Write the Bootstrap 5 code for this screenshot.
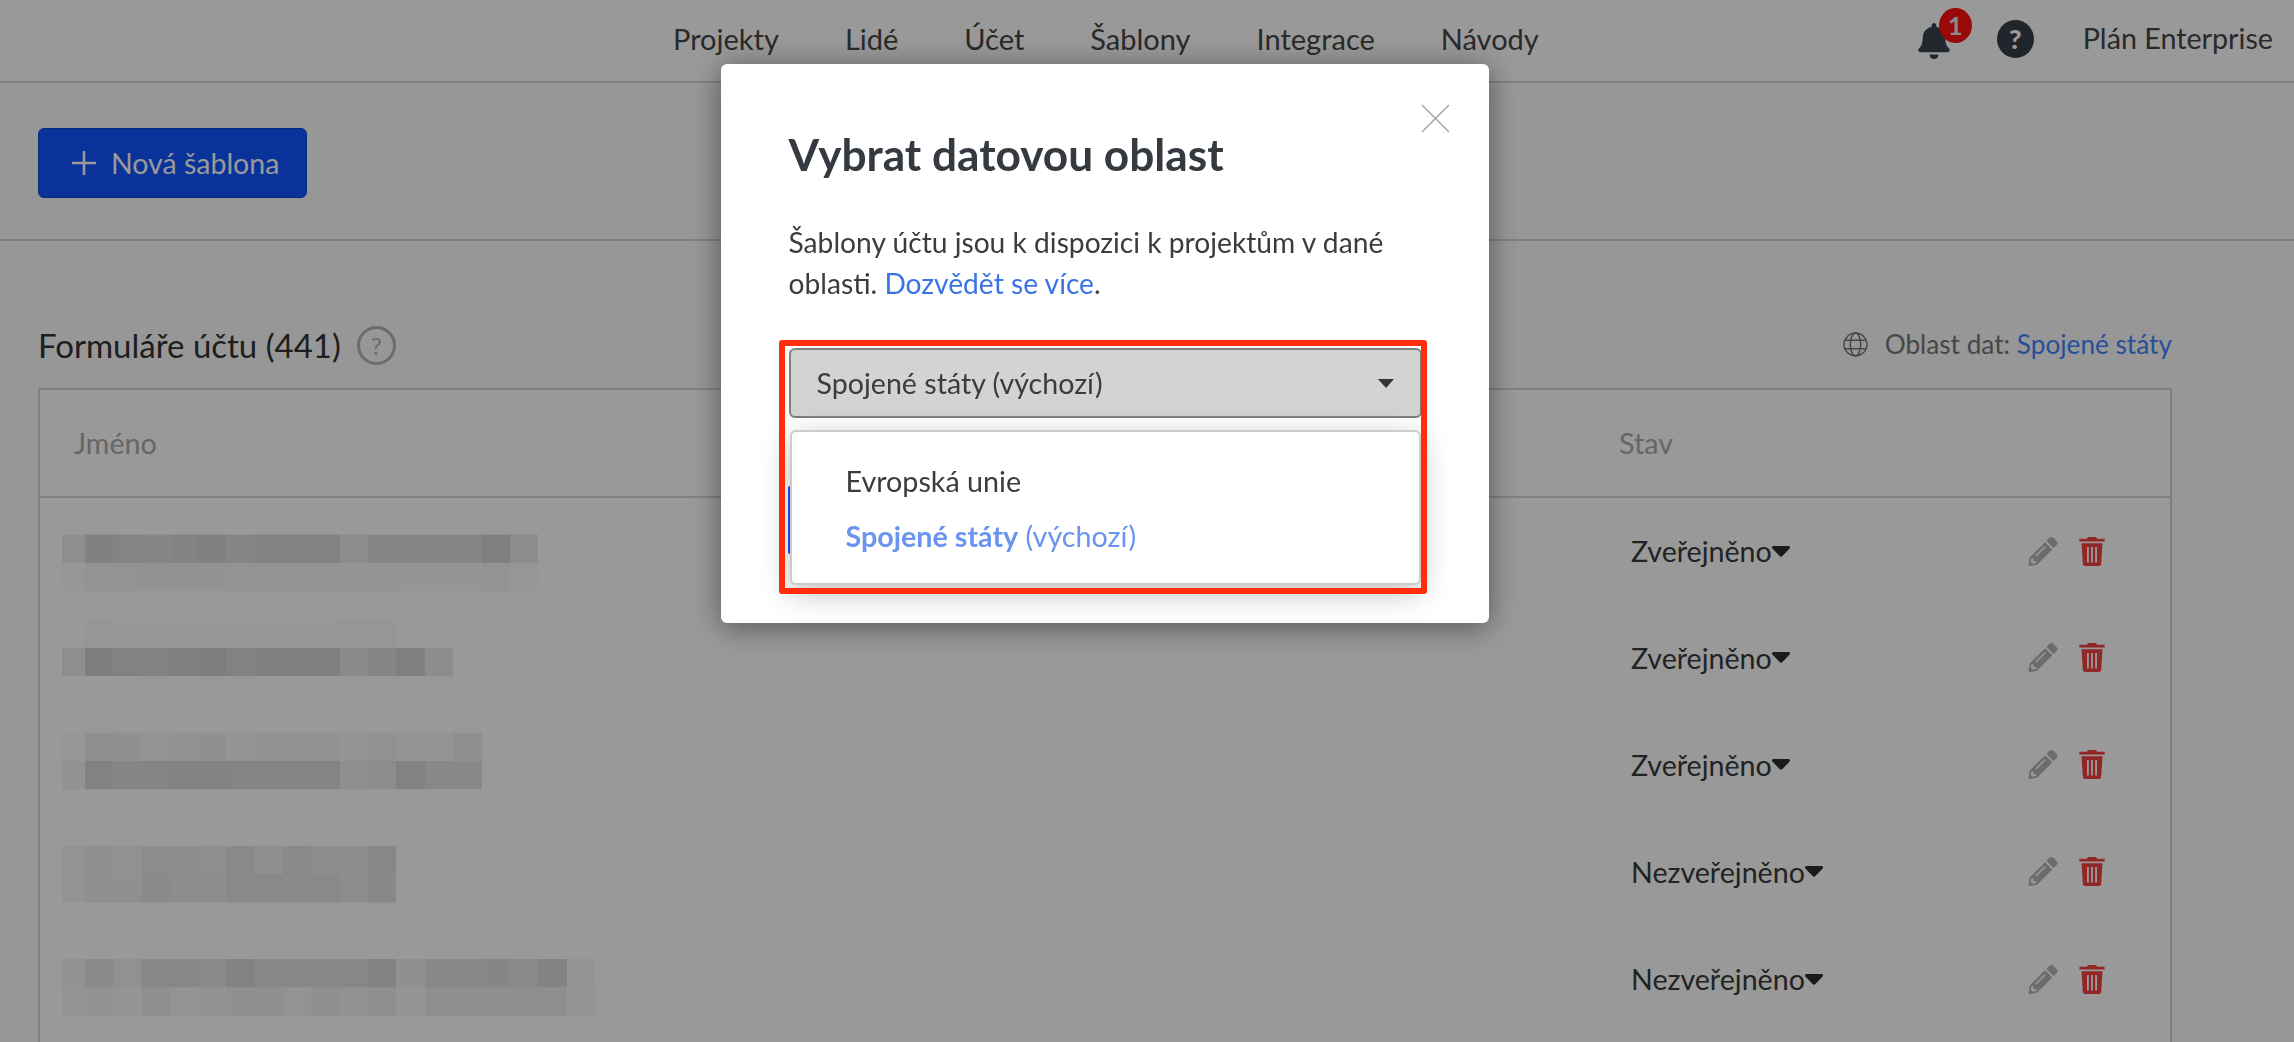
<!DOCTYPE html>
<html lang="cs">
<head>
<meta charset="utf-8">
<title>Šablony</title>
<link href="https://cdn.jsdelivr.net/npm/bootstrap@5.3.0/dist/css/bootstrap.min.css" rel="stylesheet">
<style>
html,body{height:1042px;overflow:hidden}
body{font-family:Lato,"Liberation Sans",sans-serif;background:#fcfcfc;color:#464646;font-size:28.7px}
.topbar{height:83px;border-bottom:2px solid #d6d6d6;background:#fff;padding:0 21px 3px 673px}
.topbar .nav-link{color:#464646;padding:0;font-size:29px;line-height:40px}
.topnav{gap:66px}
.bellwrap{position:relative;width:32px;height:36px;margin-right:47px}
.bellwrap svg{display:block;width:32px;height:36px;fill:#37414c;margin-top:2px}
.bellcount{position:absolute;left:21px;top:-13px;width:33px;height:35px;border-radius:50%;background:#ff1010;color:#e8e8e8;font-size:25px;line-height:35px;font-weight:700;text-align:center}
.helpdark{width:37px;height:38px;border-radius:50%;background:#343e48;color:#fff;font-size:27px;font-weight:900;line-height:38px;text-align:center;margin-right:49px}
.toolbar{height:158px;border-bottom:2px solid #d6d6d6;padding:45px 38px 0}
.btn-newtpl{width:269px;height:70px;background:#1155ff;border:1px solid #0d47d8;color:#fff;font-size:28.5px;border-radius:6px;padding:0 0 0 32px;gap:14px}
.btn-newtpl svg{width:26px;height:26px;stroke:#fff;stroke-width:2.6;fill:none}
.content{padding:0 122px 0 38px}
.heading{height:147px;padding-top:85px}
.heading h2{font-size:33px;font-weight:400;line-height:38px;margin:0;color:#333}
.helpring{width:39px;height:39px;border:3px solid #b4b4b4;border-radius:50%;color:#b4b4b4;font-size:24px;line-height:33px;text-align:center;margin-left:16px}
.regioninfo{font-size:26.2px;color:#777;line-height:36px;height:36px}
.regioninfo svg{width:25px;height:25px;stroke:#777;fill:none;stroke-width:1.4;margin-right:17px}
.regioninfo a{color:#4285ff;text-decoration:none}
.tablebox{position:relative;border:2px solid #d6d6d6;height:800px;background:#fff}
.tpl{margin:0;border-collapse:collapse;width:100%}
.tpl th{height:107px;font-weight:400;color:#aaa;font-size:28.7px;border-bottom:2px solid #d6d6d6;vertical-align:middle;padding:2px 0 0}
.tpl td{height:107.15px;vertical-align:middle;padding:0;border:0;background:transparent}
.tpl .colname{padding-left:34px}
.tpl .colstate{width:551px}
.statebtn{padding-left:12px;color:#3a3a3a;font-size:28.6px;line-height:36px}
.statebtn svg{width:18px;height:11px;fill:#2e2e2e}
.actgroup{gap:21px;margin-right:65px}
.actgroup svg{height:29px;display:block}
.icopen{width:30px;fill:#b4b4b4}
.ictrash{width:26px;fill:#f04040}
.mosaic{position:absolute;left:0;top:0;pointer-events:none}
.modal-backdrop.show{opacity:.4}
.dlg{width:768px;max-width:none;margin:64px 0 0 721px}
.dlgbox{height:559px;border:0;border-radius:6px;box-shadow:0 4px 30px rgba(0,0,0,.45);position:relative;padding:0 67.5px}
.dlgx{position:absolute;right:39px;top:40px;background:none;border:0;padding:0;line-height:0}
.dlgx svg{width:29px;height:29px;stroke:#a8a8a8;stroke-width:1.6;fill:none}
.dlgtitle{font-size:44.2px;font-weight:700;color:#343a40;line-height:52px;margin:64px 0 41.5px}
.dlgtext{font-size:28.2px;line-height:41.7px;color:#3c3c3c;margin:0 0 43.5px}
.dlgtext a{color:#3b73e6;text-decoration:none}
.pick{position:relative}
.pickbtn{width:633px;height:70px;background:#d3d3d3;border:2px solid #808080;border-radius:6px;color:#3c3c3c;font-size:28.6px;padding:0 26px}
.pickbtn svg{width:16px;height:9px;fill:#333}
.hiddenbtn{display:block;width:635px;height:68px;margin:68px 0 0 -1px;background:#1155ff;border:0;border-radius:2px;color:#fff}
.pickmenu{position:absolute;left:1px;top:82px;width:631px;height:155px;margin:0;background:#fff;border:2px solid #ccc;border-radius:6px;padding:22px 0 0 54px;font-size:28.7px;line-height:55px;box-shadow:0 8px 30px rgba(0,0,0,.25);list-style:none;z-index:2}
.pickmenu li{height:55px;color:#3c3c3c}
.pickmenu .sel{color:#6a94f0}
.redbox{position:absolute;left:58px;top:276px;width:648px;height:254px;border:6px solid #ff2d0a;border-radius:3px;z-index:3;pointer-events:none}
</style>
</head>
<body>
<nav class="topbar d-flex align-items-center">
  <ul class="nav topnav flex-nowrap">
    <li class="nav-item"><a class="nav-link" href="#">Projekty</a></li>
    <li class="nav-item"><a class="nav-link" href="#">Lidé</a></li>
    <li class="nav-item"><a class="nav-link" href="#">Účet</a></li>
    <li class="nav-item"><a class="nav-link" href="#">Šablony</a></li>
    <li class="nav-item"><a class="nav-link" href="#">Integrace</a></li>
    <li class="nav-item"><a class="nav-link" href="#">Návody</a></li>
  </ul>
  <div class="d-flex align-items-center ms-auto">
    <div class="bellwrap">
      <svg viewBox="0 0 448 512"><path d="M224 512c35.32 0 63.97-28.65 63.97-64H160.03c0 35.35 28.65 64 63.97 64zm215.39-149.71c-19.32-20.76-55.47-51.99-55.47-154.29 0-77.7-54.48-139.9-127.94-155.16V32c0-17.67-14.32-32-31.98-32s-31.98 14.33-31.98 32v20.84C118.56 68.1 64.08 130.3 64.08 208c0 102.3-36.15 133.53-55.47 154.29-6 6.45-8.66 14.16-8.61 21.71.11 16.4 12.98 32 32.1 32h383.8c19.12 0 32-15.6 32.1-32 .05-7.55-2.61-15.27-8.61-21.71z"/></svg>
      <span class="bellcount">1</span>
    </div>
    <div class="helpdark">?</div>
    <span>Plán Enterprise</span>
  </div>
</nav>
<div class="toolbar">
  <button class="btn btn-newtpl d-flex align-items-center" type="button"><svg viewBox="0 0 26 26"><path d="M13 1v24M1 13h24"/></svg>Nová šablona</button>
</div>
<main class="content">
  <div class="heading d-flex align-items-start">
    <h2>Formuláře účtu (441)</h2>
    <div class="helpring">?</div>
    <div class="regioninfo ms-auto d-flex align-items-center">
      <svg viewBox="0 0 24 24"><circle cx="12" cy="12" r="11"/><ellipse cx="12" cy="12" rx="5" ry="11"/><path d="M2 8h20M2 16h20"/></svg>
      <span>Oblast dat:&nbsp;<a href="#">Spojené státy</a></span>
    </div>
  </div>
  <div class="tablebox">
    <table class="table tpl">
      <thead><tr><th class="colname">Jméno</th><th class="colstate">Stav</th></tr></thead>
      <tbody id="rows"></tbody>
    </table>
    <svg class="mosaic" id="mosaic" width="700" height="640"></svg>
  </div>
</main>

<div class="modal-backdrop show"></div>
<div class="modal d-block" tabindex="-1">
  <div class="modal-dialog dlg">
    <div class="modal-content dlgbox">
      <button class="dlgx" type="button" aria-label="Zavřít"><svg viewBox="0 0 29 29"><path d="M1 1l27 27M28 1L1 28"/></svg></button>
      <h1 class="dlgtitle">Vybrat datovou oblast</h1>
      <p class="dlgtext">Šablony účtu jsou k dispozici k projektům v dané oblasti. <a href="#">Dozvědět se více</a>.</p>
      <div class="pick">
        <button class="btn pickbtn d-flex align-items-center justify-content-between" type="button">Spojené státy (výchozí)<svg viewBox="0 0 16 9"><path d="M0 0h16L8 9z"/></svg></button>
        <ul class="pickmenu">
          <li>Evropská unie</li>
          <li class="sel"><b>Spojené státy</b> (výchozí)</li>
        </ul>
        <button class="hiddenbtn" type="button"></button>
      </div>
      <div class="redbox"></div>
    </div>
  </div>
</div>
<script>
var states=["Zveřejněno","Zveřejněno","Zveřejněno","Nezveřejněno","Nezveřejněno"];
var pen='M497.9 142.1l-46.1 46.1c-4.7 4.7-12.3 4.7-17 0l-111-111c-4.7-4.7-4.7-12.3 0-17l46.1-46.1c18.7-18.7 49.1-18.7 67.9 0l60.1 60.1c18.8 18.7 18.8 49.1 0 67.9zM284.2 99.8L21.6 362.4.4 483.9c-2.9 16.4 11.4 30.6 27.8 27.8l121.5-21.3 262.6-262.6c4.7-4.7 4.7-12.3 0-17l-111-111c-4.8-4.7-12.4-4.7-17.1 0zM124.1 339.9c-5.5-5.5-5.5-14.3 0-19.8l154-154c5.5-5.5 14.3-5.5 19.8 0s5.5 14.3 0 19.8l-154 154c-5.5 5.5-14.3 5.5-19.8 0zM88 424h48v36.3l-64.5 11.3-31.1-31.1L51.7 376H88v48z';
var trash='M432 32H312l-9.4-18.7A24 24 0 0 0 281.1 0H166.8a23.72 23.72 0 0 0-21.4 13.3L136 32H16A16 16 0 0 0 0 48v16a16 16 0 0 0 16 16h416a16 16 0 0 0 16-16V48a16 16 0 0 0-16-16zM40 112l21 355a48 48 0 0 0 47.9 45h230.2a48 48 0 0 0 47.9-45l21-355zM136 176h32v272h-32zM208 176h32v272h-32zM280 176h32v272h-32z';
document.getElementById('rows').innerHTML=states.map(function(s){
 return '<tr><td></td><td><div class="d-flex align-items-center"><span class="statebtn d-flex align-items-center">'+s+'<svg viewBox="0 0 18 11"><path d="M2 0h14c2 0 2.6 1.6 1.4 2.8L10.4 10c-.8.9-2 .9-2.8 0L.6 2.8C-.6 1.6 0 0 2 0z"/></svg></span><div class="actgroup d-flex ms-auto"><svg class="icopen" viewBox="0 0 512 512"><path d="'+pen+'"/></svg><svg class="ictrash" viewBox="0 0 448 512"><path fill-rule="evenodd" d="'+trash+'"/></svg></div></div></td></tr>';
}).join('');
// pixelated names: each row of the mosaic is a list of greys (as seen through the backdrop)
var xs=[62,85,113,141,170,198,226,255,283,311,340,368,396,425,453,482,510,538,567,595,615];
var data=[
"8e 80 84 86 83 80 85 82 82 82 8c 85 85 85 85 7f 8c",
"96 93 93 92 92 92 93 93 93 93 94 94 95 95 95 93 96",
"9a 9b 9b 9b 9b 9b 9b 9b 9c 9b 9b 9b 9b 9b 9b 9b 9b",
"99 96 97 97 97 97 97 97 97 97 96 96",
"8e 7e 82 82 80 7e 82 80 80 80 8b 86 7f 8d 9b",
"9a 9a 9a 98 98 98 98 98 99 99 99 99 98 98 99",
"9b 9c 9c 9b 9b 9c 9c 9c 9c 9c 9b 9b 9c 9b 9b",
"96 8f 90 94 92 90 94 92 92 92 94 91 94 94 8f",
"92 82 86 84 82 82 84 84 84 84 8f 8c 82 88 88",
"9b 9c 9c 9c 9c 9c 9c 9c 9c 9c 9a 9a 9c 9b 9b",
"9b 9b 9b 9b 9b 9b 9c 9c 9c 9c 9c 9b",
"93 8f 92 8c 8c 8e 8a 8f 8a 8d 8d 87",
"93 8f 90 8a 8d 8d 89 89 8b 89 8c 88",
"9a 9a 9a 9b 9b 9b 9c 9b 9b 9b 9b 9b",
"9b 9b 9b 9c 9b 9c 9c 9c 9c 9c 9c 9c 9c 9c 9c 9c 9c 9c",
"92 8a 91 87 87 89 83 88 87 87 87 82 90 88 88 86 89 83 93 9a",
"94 92 95 8f 93 92 90 90 93 90 92 8f 95 8f 8f 8f 8f 8f 95 9a"];
var box=document.querySelector('.tablebox');
var tb=box.getBoundingClientRect();
var ox=tb.left+box.clientLeft, oy=tb.top+box.clientTop;
var out='';
data.forEach(function(row,r){
 row.split(' ').forEach(function(h,c){
  var v=Math.min(255,Math.round(parseInt(h,16)/0.6));
  out+='<rect x="'+(xs[c]-ox)+'" y="'+(534.6+r*28.3-oy)+'" width="'+(xs[c+1]-xs[c])+'" height="28.8" fill="rgb('+v+','+v+','+v+')"/>';
 });
});
document.getElementById('mosaic').innerHTML=out;
</script>
<script src="https://cdn.jsdelivr.net/npm/bootstrap@5.3.0/dist/js/bootstrap.bundle.min.js"></script>
</body>
</html>
